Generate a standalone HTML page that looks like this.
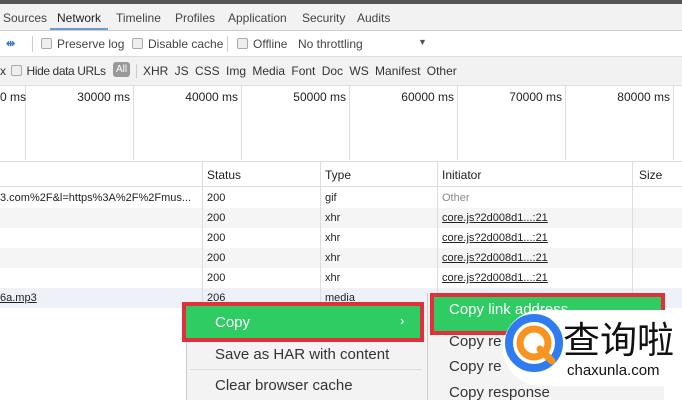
<!DOCTYPE html>
<html><head><meta charset="utf-8"><style>
body{margin:0;width:682px;height:400px;overflow:hidden;position:relative;background:#fff;font-family:"Liberation Sans","Noto Sans CJK SC",sans-serif;font-size:12px;color:#222}
.a{position:absolute;white-space:nowrap}
.cb{display:inline-block;width:9px;height:9px;border:1px solid #aaa;background:#eee;border-radius:2px;vertical-align:-1px;margin-right:5px}
.vl{position:absolute;width:1px;background:#ddd}
.hl{position:absolute;height:1px;background:#ddd;left:0;width:682px}
.u{text-decoration:underline}
</style></head><body>
<div class="a" style="left:0;top:0;width:682px;height:4px;background:#555"></div>
<div class="a" style="left:0;top:4px;width:682px;height:26px;background:#f2f2f2;border-bottom:1px solid #ccc"></div>
<div class="a" style="top:11px;left:3px;color:#444">Sources</div>
<div class="a" style="top:11px;left:57px;color:#222">Network</div>
<div class="a" style="left:50px;top:28px;width:58px;height:2px;background:#6b9bd0"></div>
<div class="a" style="top:11px;left:116px;color:#444">Timeline</div>
<div class="a" style="top:11px;left:175px;color:#444">Profiles</div>
<div class="a" style="top:11px;left:228px;color:#444">Application</div>
<div class="a" style="top:11px;left:302px;color:#444">Security</div>
<div class="a" style="top:11px;left:357px;color:#444">Audits</div>
<div class="a" style="top:37px;left:6px;color:#3a78c0;font-weight:bold;font-size:11px">⇹</div>
<div class="vl" style="left:32px;top:36px;height:16px;background:#ccc"></div>
<div class="a" style="top:37px;left:41px;color:#444"><span class="cb"></span>Preserve log</div>
<div class="a" style="top:37px;left:132px;color:#444"><span class="cb"></span>Disable cache</div>
<div class="vl" style="left:227px;top:36px;height:16px;background:#ccc"></div>
<div class="a" style="top:37px;left:237px;color:#444"><span class="cb"></span>Offline</div>
<div class="a" style="top:37px;left:298px;color:#444">No throttling</div>
<div class="a" style="top:37px;left:418px;color:#555;font-size:9px">▼</div>
<div class="a" style="left:0;top:56px;width:682px;height:28px;background:#f2f2f2;border-top:1px solid #ddd;border-bottom:1px solid #ddd"></div>
<div class="a" style="top:64px;left:0;color:#333;font-size:12px;letter-spacing:-0.4px">x <span class="cb" style="margin-left:2px"></span>Hide data URLs</div>
<div class="a" style="top:62px;left:113px;width:17px;height:15px;background:#999;border-radius:3px;color:#fff;font-size:10px;text-align:center;line-height:15px">All</div>
<div class="a" style="top:64px;left:136px;width:1px;height:14px;background:#ccc"></div>
<div class="a" style="top:64px;left:143px;color:#333;word-spacing:3px;font-size:12px">XHR JS CSS Img Media Font Doc WS Manifest Other</div>
<div class="vl" style="left:25px;top:85px;height:75px"></div>
<div class="vl" style="left:133px;top:85px;height:75px"></div>
<div class="vl" style="left:241px;top:85px;height:75px"></div>
<div class="vl" style="left:349px;top:85px;height:75px"></div>
<div class="vl" style="left:457px;top:85px;height:75px"></div>
<div class="vl" style="left:565px;top:85px;height:75px"></div>
<div class="vl" style="left:673px;top:85px;height:75px"></div>
<div class="a" style="top:90px;left:0">0 ms</div>
<div class="a" style="top:90px;right:552px">30000 ms</div>
<div class="a" style="top:90px;right:444px">40000 ms</div>
<div class="a" style="top:90px;right:336px">50000 ms</div>
<div class="a" style="top:90px;right:228px">60000 ms</div>
<div class="a" style="top:90px;right:120px">70000 ms</div>
<div class="a" style="top:90px;right:12px">80000 ms</div>
<div class="hl" style="top:161px"></div>
<div class="hl" style="top:186px"></div>
<div class="a" style="left:0;top:208px;width:682px;height:20px;background:#f5f5f5"></div>
<div class="a" style="left:0;top:248px;width:682px;height:20px;background:#f5f5f5"></div>
<div class="a" style="left:0;top:288px;width:682px;height:20px;background:#eef2f8"></div>
<div class="vl" style="left:202px;top:161px;height:147px"></div>
<div class="vl" style="left:320px;top:161px;height:147px"></div>
<div class="vl" style="left:437px;top:161px;height:147px"></div>
<div class="vl" style="left:632px;top:161px;height:147px"></div>
<div class="a" style="top:168px;left:207px">Status</div>
<div class="a" style="top:168px;left:325px">Type</div>
<div class="a" style="top:168px;left:442px">Initiator</div>
<div class="a" style="top:168px;left:639px">Size</div>
<div class="a" style="top:192px;left:0;font-size:11px">3.com%2F&amp;l=https%3A%2F%2Fmus...</div>
<div class="a" style="top:192px;left:207px;font-size:11px">200</div><div class="a" style="top:192px;left:325px;font-size:11px">gif</div><div class="a" style="top:192px;left:442px;font-size:11px;color:#888">Other</div>
<div class="a" style="top:212px;left:207px;font-size:11px">200</div><div class="a" style="top:212px;left:325px;font-size:11px">xhr</div><div class="a u" style="top:212px;left:442px;font-size:11px">core.js?2d008d1...:21</div>
<div class="a" style="top:232px;left:207px;font-size:11px">200</div><div class="a" style="top:232px;left:325px;font-size:11px">xhr</div><div class="a u" style="top:232px;left:442px;font-size:11px">core.js?2d008d1...:21</div>
<div class="a" style="top:252px;left:207px;font-size:11px">200</div><div class="a" style="top:252px;left:325px;font-size:11px">xhr</div><div class="a u" style="top:252px;left:442px;font-size:11px">core.js?2d008d1...:21</div>
<div class="a" style="top:272px;left:207px;font-size:11px">200</div><div class="a" style="top:272px;left:325px;font-size:11px">xhr</div><div class="a u" style="top:272px;left:442px;font-size:11px">core.js?2d008d1...:21</div>
<div class="a u" style="top:292px;left:0;font-size:11px">6a.mp3</div>
<div class="a" style="top:292px;left:207px;font-size:11px">206</div><div class="a" style="top:292px;left:325px;font-size:11px">media</div>
<!-- menu -->
<div class="a" style="left:186px;top:302px;width:240px;height:98px;background:#f3f3f3;border-left:1px solid #ccc"></div>
<div class="a" style="left:182px;top:302px;width:234px;height:32px;border:4px solid #e0303a;background:#2ecc63"></div>
<div class="a" style="left:215px;top:314px;color:#fff;font-size:15px">Copy</div>
<div class="a" style="left:400px;top:313px;color:#fff;font-size:13px">›</div>
<div class="a" style="left:215px;top:346px;color:#333;font-size:15px">Save as HAR with content</div>
<div class="hl" style="left:190px;width:232px;top:369px;background:#ddd"></div>
<div class="a" style="left:215px;top:377px;color:#333;font-size:15px">Clear browser cache</div>
<div class="a" style="left:427px;top:293px;width:236px;height:107px;background:#f3f3f3;border-left:1px solid #ccc"></div>
<div class="a" style="left:430px;top:293px;width:227px;height:34px;border:4px solid #e0303a;background:#2ecc63"></div>
<div class="a" style="left:449px;top:301px;color:#fff;font-size:15px">Copy link address</div>
<div class="a" style="left:449px;top:333px;color:#333;font-size:15px">Copy re</div>
<div class="a" style="left:449px;top:358px;color:#333;font-size:15px">Copy re</div>
<div class="a" style="left:449px;top:384px;color:#333;font-size:15px">Copy response</div>
<!-- logo -->
<div class="a" style="left:503px;top:310px;width:179px;height:76px;background:#fff;border-radius:38px 0 0 38px"></div>
<svg class="a" style="left:503px;top:312px" width="62" height="62" viewBox="0 0 62 62">
<circle cx="31" cy="31" r="25" fill="none" stroke="#2f7cf0" stroke-width="8"/>
<circle cx="31" cy="31" r="14" fill="none" stroke="#f7931e" stroke-width="7"/>
<path d="M37 37 L49 49" stroke="#f7931e" stroke-width="7" stroke-linecap="round"/>
</svg>
<div class="a" style="left:563px;top:314px;font-size:37px;color:#111;font-family:'Noto Sans CJK SC',sans-serif;line-height:46px">查询啦</div>
<div class="a" style="left:567px;top:362px;font-size:15px;color:#111">chaxunla.com</div>
</body></html>
